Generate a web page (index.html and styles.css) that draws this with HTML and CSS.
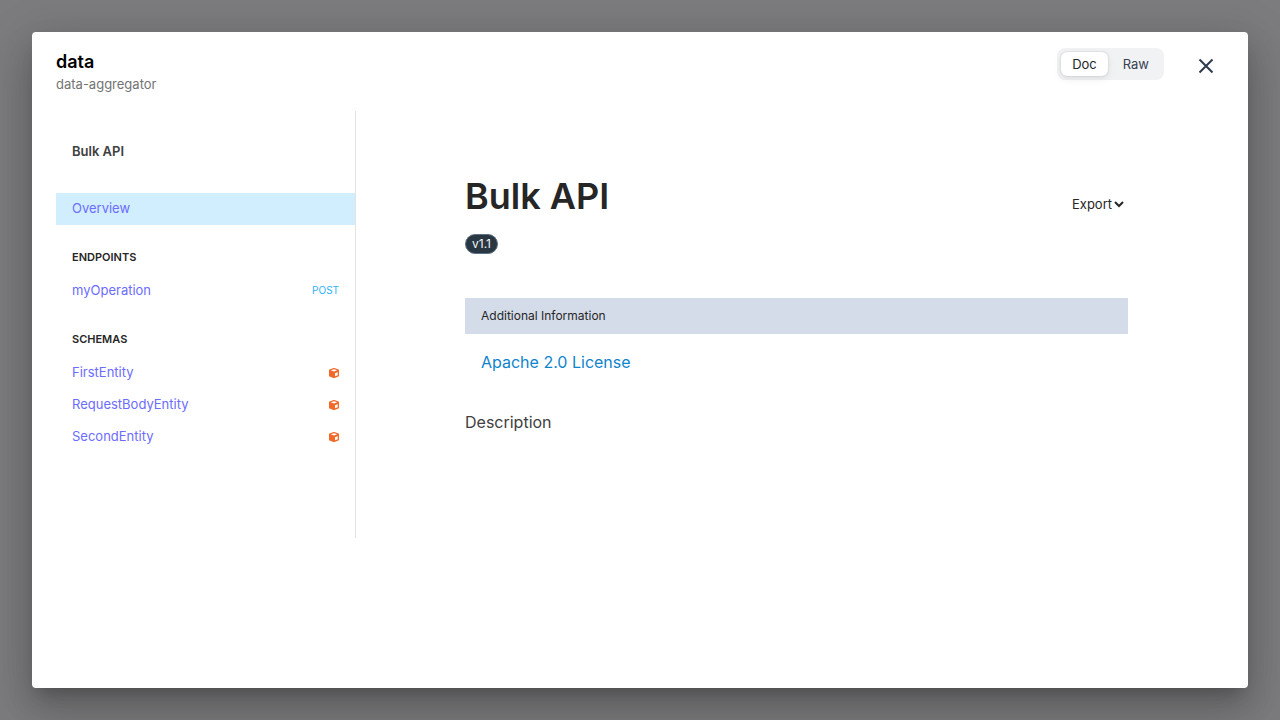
FILE: index.html
```html
<!DOCTYPE html>
<html lang="en">
<head>
<meta charset="utf-8">
<meta name="viewport" content="width=device-width, initial-scale=1">
<title>data</title>
<link rel="stylesheet" href="styles.css">
</head>
<body>
<svg class="defs" aria-hidden="true">
  <symbol id="cube" viewBox="0 0 10 10"><path fill="currentColor" fill-rule="evenodd" d="M4.600.1.500 1.400Q0 1.600 0 2.200V7.500Q0 8.100.500 8.400L4.500 9.900Q5 10.100 5.500 9.900L9.500 8.400Q10 8.100 10 7.500V2.200Q10 1.600 9.500 1.400L5.400.1Q5-.1 4.600.1ZM5 1.300 8.300 2.300 5 3.400 1.700 2.300ZM6 5.200 8.700 4.200V7.200L6 8.200Z"/></symbol>
</svg>
<div class="backdrop">
  <div class="dialog" role="dialog" aria-labelledby="dialog-title">
    <header class="dialog-header">
      <div class="heading">
        <h2 class="dialog-title" id="dialog-title">data</h2>
        <p class="dialog-subtitle">data-aggregator</p>
      </div>
      <div class="actions">
        <div class="toggle" role="group" aria-label="View">
          <button class="toggle-option selected" type="button" aria-pressed="true">Doc</button>
          <button class="toggle-option" type="button" aria-pressed="false">Raw</button>
        </div>
        <button class="close" type="button" aria-label="Close">
          <svg width="16" height="16" viewBox="0 0 16 16" fill="none" stroke="currentColor" stroke-width="2"><path d="M1.500 1.500l13 13M14.500 1.500l-13 13"/></svg>
        </button>
      </div>
    </header>
    <div class="content">
      <nav class="sidebar">
        <h4 class="api-name">Bulk API</h4>
        <a class="item active" href="#overview">Overview</a>
        <h5 class="group">Endpoints</h5>
        <a class="item" href="#my-operation">myOperation<span class="method">POST</span></a>
        <h5 class="group">Schemas</h5>
        <a class="item" href="#first">FirstEntity<svg class="cube"><use href="#cube"/></svg></a>
        <a class="item" href="#request-body">RequestBodyEntity<svg class="cube"><use href="#cube"/></svg></a>
        <a class="item" href="#second">SecondEntity<svg class="cube"><use href="#cube"/></svg></a>
      </nav>
      <main class="page">
        <div class="title-row">
          <h1 class="page-title">Bulk API</h1>
          <button class="export" type="button">Export
            <svg width="10" height="10" viewBox="0 0 10 10" fill="none" stroke="currentColor" stroke-width="2"><path d="M1 3l4 4 4-4"/></svg>
          </button>
        </div>
        <span class="version">v1.1</span>
        <section class="info">
          <h3 class="info-title">Additional Information</h3>
          <div class="info-body"><a class="license" href="#license">Apache 2.0 License</a></div>
        </section>
        <p class="description">Description</p>
      </main>
    </div>
  </div>
</div>
</body>
</html>
```
FILE: styles.css
```css
* { box-sizing: border-box; margin: 0; padding: 0; }
body { font-family: Inter, "Liberation Sans", sans-serif; font-size: 13px; line-height: 20px; color: #262626; }
button { font: inherit; color: inherit; border: 0; background: none; cursor: pointer; }
a { text-decoration: none; }
.defs { position: absolute; width: 0; height: 0; }
.backdrop { display: flex; min-height: 100vh; padding: 32px; background: #7c7c7e; overflow: hidden; }
.dialog {
  flex: 1; padding: 16px 24px 24px; background: #fff; border-radius: 4px;
  box-shadow: 0 11px 15px -7px rgba(0, 0, 0, .2), 0 24px 38px 3px rgba(0, 0, 0, .14), 0 9px 46px 8px rgba(0, 0, 0, .12);
}
.dialog-header { display: flex; justify-content: space-between; align-items: flex-start; min-height: 63px; }
.dialog-title { font-size: 18px; line-height: 27px; font-weight: 600; color: #000; }
.dialog-subtitle { line-height: 18px; color: #737373; }
.actions { display: flex; gap: 24px; }
.toggle { display: flex; gap: 4px; height: 32px; padding: 4px; background: #f1f2f4; border-radius: 8px; }
.toggle-option { padding: 0 11px; border-radius: 6px; line-height: 24px; color: #374151; }
.toggle-option.selected { background: #fff; color: #262626; box-shadow: 0 0 2px rgba(0, 0, 0, .2), 0 3px 8px rgba(0, 0, 0, .08); }
.close { display: grid; place-items: center; width: 36px; height: 36px; color: #2f3a4c; }
.content { display: flex; align-items: flex-start; }
.sidebar { flex: 0 0 300px; min-height: 427px; padding-top: 30px; border-right: 1px solid #e2e3e5; }
.api-name { padding: 0 16px; margin-bottom: 32px; font-size: 13px; font-weight: 600; color: #404040; }
.item { display: flex; justify-content: space-between; padding: 5px 16px 7px; color: #6c6cff; }
.item.active { background: #d1eeff; }
.group { padding: 0 16px; margin: 22px 0 8px; font-size: 11px; font-weight: 600; text-transform: uppercase; }
.method { font-size: 10px; color: #2eb0fa; }
.cube { width: 10px; height: 10px; margin-top: 6px; color: #f26829; }
.page { flex: 1; padding: 62px 96px 0 109px; }
.title-row { display: flex; justify-content: space-between; align-items: center; }
.page-title { font-size: 36px; line-height: 46px; font-weight: 600; }
.export { display: flex; align-items: center; gap: 2px; padding: 16px 4px 0 0; }
.version { display: inline-block; margin-top: 15px; padding: 0 6px; border: 1px solid #5c7185; border-radius: 10px; background: #293742; color: #f5f8fa; font-size: 12px; line-height: 18px; }
.info { margin-top: 44px; }
.info-title { padding: 8px 16px; background: #d5dce9; font-size: 12px; font-weight: 400; }
.info-body { padding: 16px; font-size: 16px; line-height: 24px; }
.license { color: #0f84cc; }
.description { margin-top: 20px; font-size: 16px; line-height: 24px; color: #404040; }
```
